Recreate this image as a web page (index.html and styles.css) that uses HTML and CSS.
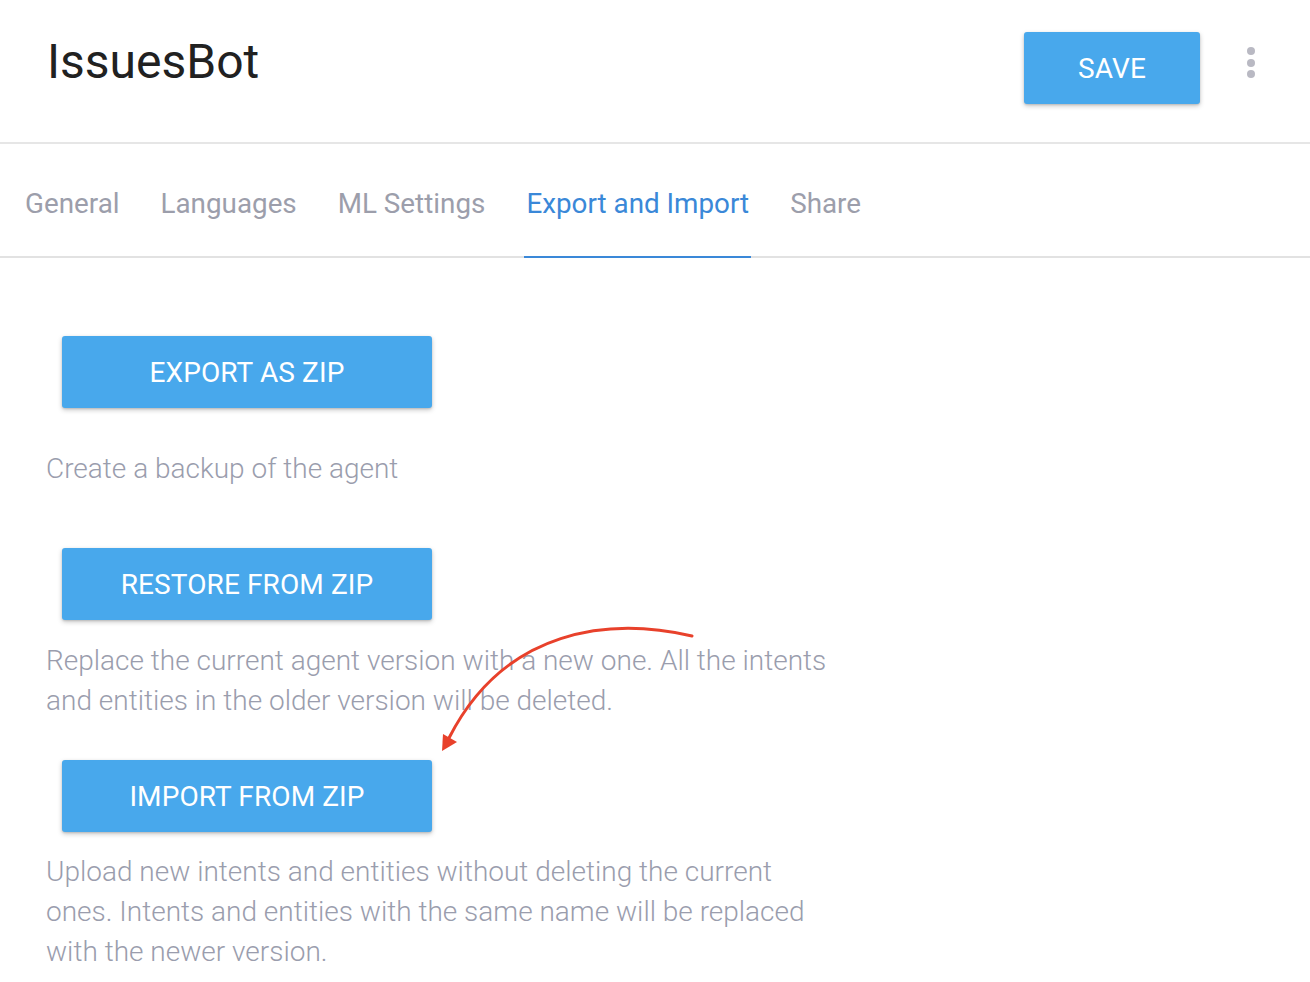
FILE: index.html
```html
<!DOCTYPE html>
<html>
<head>
<meta charset="utf-8">
<link rel="stylesheet" href="styles.css">
</head>
<body>
<div class="page">
  <header class="header">
    <h1 class="title">IssuesBot</h1>
    <div class="header-actions">
      <button class="btn btn-save">SAVE</button>
      <div class="more">
        <span class="dot"></span><span class="dot"></span><span class="dot"></span>
      </div>
    </div>
  </header>
  <nav class="tabs">
    <div class="tab">General</div>
    <div class="tab">Languages</div>
    <div class="tab">ML Settings</div>
    <div class="tab active">Export and Import</div>
    <div class="tab">Share</div>
  </nav>
  <main class="content">
    <section class="block block-export">
      <button class="btn btn-action">EXPORT AS ZIP</button>
      <p class="desc">Create a backup of the agent</p>
    </section>
    <section class="block block-restore">
      <button class="btn btn-action">RESTORE FROM ZIP</button>
      <p class="desc">Replace the current agent version with a new one. All the intents and entities in the older version will be deleted.</p>
    </section>
    <section class="block block-import">
      <button class="btn btn-action">IMPORT FROM ZIP</button>
      <p class="desc">Upload new intents and entities without deleting the current ones. Intents and entities with the same name will be replaced with the newer version.</p>
    </section>
  </main>
  <svg class="annotation" width="1310" height="982" viewBox="0 0 1310 982">
    <path d="M692,636 C610,617 505,628 449,738" fill="none" stroke="#e8412b" stroke-width="3" stroke-linecap="round"/>
    <polygon points="442,751 443,734 457,742" fill="#e8412b"/>
  </svg>
</div>
</body>
</html>
```
FILE: styles.css
```css
* { box-sizing: border-box; }
html, body { margin: 0; padding: 0; background: #fff; }
body { font-family: Roboto, "Liberation Sans", Arial, sans-serif; }

.page { position: relative; width: 1310px; min-height: 982px; }

.header {
  height: 144px;
  display: flex;
  justify-content: space-between;
  align-items: flex-start;
  padding: 0 55px 0 47px;
  border-bottom: 2px solid #e6e6e6;
}
.title {
  margin: 34px 0 0 0;
  font-size: 48px;
  line-height: 56px;
  font-weight: 400;
  color: #212121;
}
.header-actions {
  display: flex;
  align-items: flex-start;
  gap: 47px;
  margin-top: 32px;
}
.btn {
  border: none;
  border-radius: 3px;
  background: #48a8ec;
  color: #fff;
  font-family: Roboto, "Liberation Sans", Arial, sans-serif;
  font-weight: 400;
  font-size: 28px;
  letter-spacing: 0.1px;
  box-shadow: 0 2px 5px rgba(0,0,0,0.22), 0 1px 2px rgba(0,0,0,0.12);
  cursor: pointer;
  padding: 0;
}
.btn-save { width: 176px; height: 72px; }
.more {
  display: flex;
  flex-direction: column;
  gap: 3.5px;
  margin-top: 15px;
}
.dot {
  width: 8px;
  height: 8px;
  border-radius: 50%;
  background: #b9b9c3;
}

.tabs {
  height: 114px;
  display: flex;
  align-items: stretch;
  gap: 37px;
  padding: 46px 0 0 23px;
  border-bottom: 2px solid #e2e2e2;
}
.tab {
  padding: 0 2px;
  font-size: 27.8px;
  line-height: 28px;
  color: #9c9eab;
  margin-bottom: -2px;
  border-bottom: 2px solid transparent;
}
.tab.active {
  color: #3a88d8;
  border-bottom-color: #3a88d8;
}

.content { padding: 0 0 0 46px; }
.block { display: flex; flex-direction: column; align-items: flex-start; }
.btn-action { width: 370px; height: 72px; margin-left: 16px; }
.block-export { padding-top: 78px; }
.block-export .desc { margin-top: 41px; }
.block-restore { padding-top: 59px; }
.block-restore .desc { margin-top: 21px; }
.block-import { padding-top: 39px; }
.block-import .desc { margin-top: 20px; }
.desc {
  margin: 0;
  width: 785px;
  font-size: 28px;
  line-height: 40px;
  font-weight: 300;
  color: #9a9dad;
}

.annotation {
  position: absolute;
  left: 0;
  top: 0;
  pointer-events: none;
}
```
